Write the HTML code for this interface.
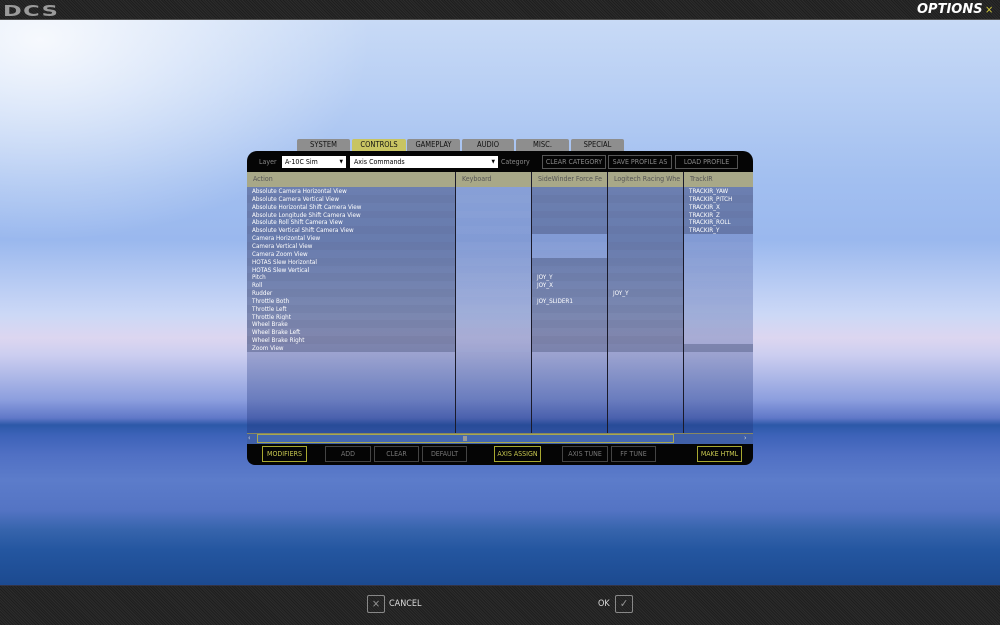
<!DOCTYPE html>
<html><head><meta charset="utf-8"><style>
*{margin:0;padding:0;box-sizing:border-box}
body{width:1000px;height:625px;overflow:hidden;position:relative;font-family:"DejaVu Sans Condensed","DejaVu Sans","Liberation Sans",sans-serif;
background:linear-gradient(180deg,#c8daf6 20px,#b8cff4 90px,#a2bff0 180px,#9ab8ee 240px,#bccef4 290px,#ccd8f6 315px,#dcd6f0 338px,#cccef0 355px,#b0bae8 375px,#8c9ede 400px,#6078c8 418px,#2c58a8 425px,#3c62b8 435px,#5070c4 455px,#5c7cca 480px,#5474c4 510px,#3664ac 530px,#2456a0 550px,#1c4a90 585px)}
.glow{position:absolute;left:0;top:20px;width:1000px;height:300px;background:radial-gradient(ellipse 330px 200px at 40px 20px,rgba(255,255,255,.85),rgba(255,255,255,0))}
.bar{position:absolute;left:0;width:1000px;background:repeating-linear-gradient(45deg,#2c2c2c 0 1px,#1e1e1e 1px 2px)}
.ab{position:absolute}
.tab{position:absolute;top:139px;height:12px;background:#8e8e8e;font-size:7.5px;color:#111;text-align:center;line-height:12px;border-radius:2px 2px 0 0}
.hdr{position:absolute;top:172px;height:15px;background:#a8a888;color:#555;font-size:7px;line-height:15px;padding-left:6px;border-right:1px solid #222}
.cell{position:absolute}
.t{position:absolute;color:#fff;font-size:6.3px;white-space:nowrap}
.vl{position:absolute;top:172px;width:1px;height:261px;background:#1a1a2a}
.btn{position:absolute;top:446px;height:16px;border:1px solid #444;color:#777;font-size:7px;line-height:14px;text-align:center}
.y{border-color:#a8a830;color:#c8c850}
.sb{position:absolute;border:1px solid #555;color:#888;font-size:7px;text-align:center}
</style></head><body>
<div class="glow"></div>
<div class="bar" style="top:0;height:20px;border-bottom:1px solid #555"></div>
<div class="ab" style="left:3px;top:2px;font:bold 15px 'DejaVu Sans',sans-serif;color:#9a9a9a;letter-spacing:1px;transform:scaleX(1.5);transform-origin:left">DCS</div>
<div class="ab" style="left:917px;top:2px;font:italic bold 13px 'DejaVu Sans',sans-serif;color:#fff">OPTIONS</div>
<div class="ab" style="left:985px;top:3px;font-size:11px;color:#d8d040">×</div>
<div class="bar" style="top:585px;height:40px;border-top:1px solid #334"></div>
<div class="ab" style="left:367px;top:595px;width:18px;height:18px;border:1px solid #888;border-radius:2px;color:#999;font-size:11px;text-align:center;line-height:16px">×</div>
<div class="ab" style="left:389px;top:599px;color:#ddd;font-size:9px">CANCEL</div>
<div class="ab" style="left:598px;top:599px;color:#ddd;font-size:9px">OK</div>
<div class="ab" style="left:615px;top:595px;width:18px;height:18px;border:1px solid #888;border-radius:2px;color:#999;font-size:11px;text-align:center;line-height:16px">✓</div>

<div class="tab" style="left:297px;width:53px">SYSTEM</div>
<div class="tab" style="left:352px;width:54px;background:#c8c462">CONTROLS</div>
<div class="tab" style="left:407px;width:53px">GAMEPLAY</div>
<div class="tab" style="left:462px;width:52px">AUDIO</div>
<div class="tab" style="left:516px;width:53px">MISC.</div>
<div class="tab" style="left:571px;width:53px">SPECIAL</div>
<div class="ab" style="left:247px;top:151px;width:506px;height:22px;background:#050505;border-radius:10px 10px 0 0"></div>
<div class="ab" style="left:247px;top:443px;width:506px;height:22px;background:#050505;border-radius:0 0 8px 8px"></div>
<div class="ab" style="left:259px;top:158px;color:#888;font-size:7px">Layer</div>
<div class="ab" style="left:282px;top:156px;width:64px;height:12px;background:#fff;font-size:7px;line-height:12px;padding-left:3px">A-10C Sim<span style="position:absolute;right:3px;font-size:5px">▼</span></div>
<div class="ab" style="left:350px;top:156px;width:148px;height:12px;background:#fff;font-size:7px;line-height:12px;padding-left:4px">Axis Commands<span style="position:absolute;right:3px;font-size:5px">▼</span></div>
<div class="ab" style="left:501px;top:158px;color:#888;font-size:7px">Category</div>
<div class="sb" style="left:542px;width:64px;top:155px;height:14px;line-height:12px">CLEAR CATEGORY</div>
<div class="sb" style="left:608px;width:64px;top:155px;height:14px;line-height:12px">SAVE PROFILE AS</div>
<div class="sb" style="left:675px;width:63px;top:155px;height:14px;line-height:12px">LOAD PROFILE</div>

<div class="ab" style="left:247px;top:187px;width:506px;height:246px;background:linear-gradient(180deg,rgba(60,80,150,.3),rgba(50,70,140,.3) 60%,rgba(30,50,120,.35))"></div>
<div class="hdr" style="left:247px;width:209px">Action</div>
<div class="hdr" style="left:456px;width:76px">Keyboard</div>
<div class="hdr" style="left:532px;width:76px;overflow:hidden;white-space:nowrap">SideWinder Force Fe</div>
<div class="hdr" style="left:608px;width:76px;overflow:hidden;white-space:nowrap">Logitech Racing Whe</div>
<div class="hdr" style="left:684px;width:69px;border:0">TrackIR</div>
<div id="rows"></div>
<div class="vl" style="left:455px"></div><div class="vl" style="left:531px"></div><div class="vl" style="left:607px"></div><div class="vl" style="left:683px"></div>
<div class="ab" style="left:247px;top:433px;width:506px;height:11px;background:#4060a8;border-top:1px solid #888860"></div>
<div class="ab" style="left:257px;top:434px;width:417px;height:9px;border:1px solid #a8a850;background:#4468b0"></div>
<div class="ab" style="left:463px;top:436px;width:4px;height:5px;background:#999"></div>
<div class="ab" style="left:248px;top:434px;width:8px;height:9px;color:#ddd;font-size:7px;line-height:9px">‹</div>
<div class="ab" style="left:744px;top:434px;width:8px;height:9px;color:#ddd;font-size:7px;line-height:9px">›</div>
<div class="btn y" style="left:262px;width:45px">MODIFIERS</div>
<div class="btn" style="left:325px;width:46px">ADD</div>
<div class="btn" style="left:374px;width:45px">CLEAR</div>
<div class="btn" style="left:422px;width:45px">DEFAULT</div>
<div class="btn y" style="left:494px;width:47px">AXIS ASSIGN</div>
<div class="btn" style="left:562px;width:46px">AXIS TUNE</div>
<div class="btn" style="left:611px;width:45px">FF TUNE</div>
<div class="btn y" style="left:697px;width:45px">MAKE HTML</div>
<script>
var A=["Absolute Camera Horizontal View","Absolute Camera Vertical View","Absolute Horizontal Shift Camera View","Absolute Longitude Shift Camera View","Absolute Roll Shift Camera View","Absolute Vertical Shift Camera View","Camera Horizontal View","Camera Vertical View","Camera Zoom View","HOTAS Slew Horizontal","HOTAS Slew Vertical","Pitch","Roll","Rudder","Throttle Both","Throttle Left","Throttle Right","Wheel Brake","Wheel Brake Left","Wheel Brake Right","Zoom View"];
var T=["TRACKIR_YAW","TRACKIR_PITCH","TRACKIR_X","TRACKIR_Z","TRACKIR_ROLL","TRACKIR_Y"];
var cols=[[247,208],[456,75],[532,75],[608,75],[684,69]],h="";
function Y(i){return Math.round(187+i*7.85);}
for(var i=0;i<21;i++){var y=Y(i),hh=Y(i+1)-y,alt=i%2?0.06:0;
 for(var c=0;c<5;c++){var dark=(c==0||c==3||(c==2&&(i<6||i>8))||(c==4&&(i<6||i==20)));
  var bg=dark?"rgba(80,90,130,"+(0.45+alt)+")":"rgba(170,185,230,"+(0.12+alt)+")";
  h+='<div class="cell" style="left:'+cols[c][0]+'px;top:'+y+'px;width:'+cols[c][1]+'px;height:'+hh+'px;background:'+bg+'"></div>';}
 h+='<div class="t" style="left:252px;top:'+(y+0.5)+'px;line-height:'+hh+'px">'+A[i]+'</div>';
 if(i<6)h+='<div class="t" style="left:689px;top:'+(y+0.5)+'px;line-height:'+hh+'px">'+T[i]+'</div>';
}
var J={11:"JOY_Y",12:"JOY_X",14:"JOY_SLIDER1"};
for(var k in J)h+='<div class="t" style="left:537px;top:'+(Y(+k)+0.5)+'px;line-height:8px">'+J[k]+'</div>';
h+='<div class="t" style="left:613px;top:'+(Y(13)+0.5)+'px;line-height:8px">JOY_Y</div>';
document.getElementById("rows").innerHTML=h;
</script>
</body></html>
